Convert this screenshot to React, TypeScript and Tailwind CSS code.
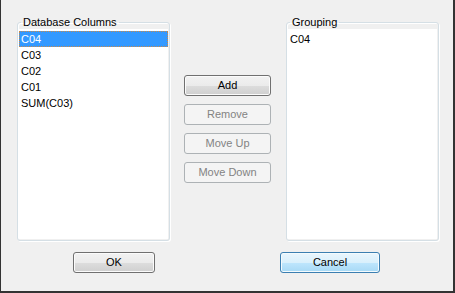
import { useState } from "react";

const font = { fontFamily: '"Liberation Sans", Arial, sans-serif' };

const normalBtn =
  "border border-[#707070] rounded-[3px] text-black bg-[linear-gradient(#f2f2f2_0%,#ebebeb_50%,#dddddd_51%,#cfcfcf_100%)] shadow-[inset_0_0_0_1px_#fbfbfb]";
const disabledBtn = "border border-[#adb2b5] rounded-[3px] bg-[#f4f4f4] text-[#838383]";
const hotBtn =
  "border border-[#3c7fb1] rounded-[3px] text-black bg-[linear-gradient(#eaf6fd_0%,#d9f0fc_50%,#bee6fd_51%,#a7d9f5_100%)] shadow-[inset_0_0_0_1px_#f4fbfe]";

function Group({ title, items, selected }: { title: string; items: string[]; selected?: number }) {
  return (
    <fieldset className="w-[153px] h-[226px] border border-[#d5dfe5] rounded-[3px] shadow-[inset_1px_1px_0_#ffffff,1px_1px_0_#ffffff] flex flex-col">
      <legend className="ml-[3px] px-[2px] leading-[14px] text-black">{title}</legend>
      <div className="mx-[1px] mb-[1px] flex-1 bg-white pt-[2px]">
        {items.map((it, i) => (
          <div
            key={it}
            className={
              "h-[16px] leading-[14px] px-[1px] border " +
              (i === selected
                ? "bg-[#3399ff] text-white border-dotted border-[#c8894a]"
                : "border-transparent text-black")
            }
          >
            {it}
          </div>
        ))}
      </div>
    </fieldset>
  );
}

export default function App() {
  const [cols] = useState(["C04", "C03", "C02", "C01", "SUM(C03)"]);
  return (
    <div
      className="w-[455px] h-[293px] bg-[#f0f0f0] border-l border-r-2 border-b-2 border-[#333333] text-[11px] flex flex-col"
      style={font}
    >
      <div className="flex pl-[16px] pt-[15px]">
        <Group title="Database Columns" items={cols} selected={0} />
        <div className="ml-[14px] mt-[60px] w-[87px] flex flex-col gap-[8px]">
          <button type="button" className={"h-[21px] " + normalBtn}>Add</button>
          <button type="button" disabled className={"h-[21px] " + disabledBtn}>Remove</button>
          <button type="button" disabled className={"h-[21px] " + disabledBtn}>Move Up</button>
          <button type="button" disabled className={"h-[21px] " + disabledBtn}>Move Down</button>
        </div>
        <div className="ml-[15px]">
          <Group title="Grouping" items={["C04"]} />
        </div>
      </div>
      <div className="flex pl-[72px] mt-[11px] gap-[125px]">
        <button type="button" className={"w-[82px] h-[21px] " + normalBtn}>OK</button>
        <button type="button" className={"w-[100px] h-[21px] " + hotBtn}>Cancel</button>
      </div>
    </div>
  );
}
